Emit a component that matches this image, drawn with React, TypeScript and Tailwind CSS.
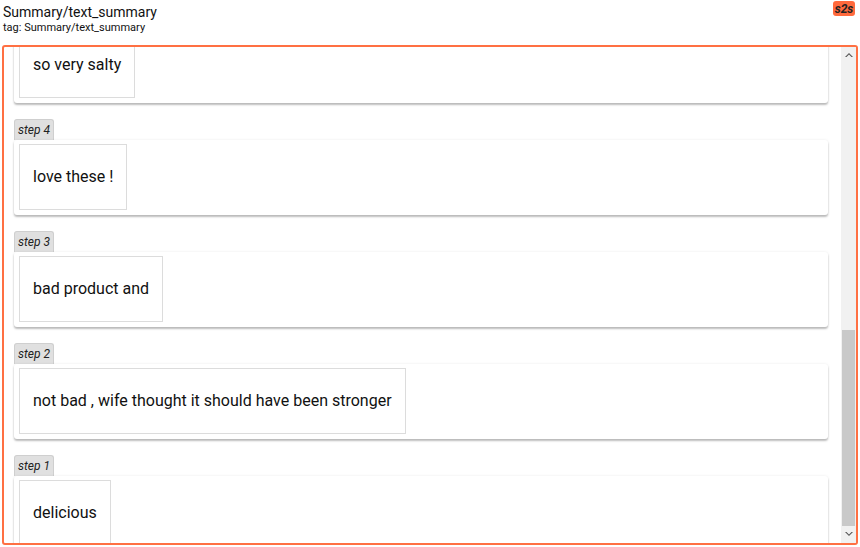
import React from "react";

const steps = [
  { label: "step 5", text: "so very salty" },
  { label: "step 4", text: "love these !" },
  { label: "step 3", text: "bad product and" },
  { label: "step 2", text: "not bad , wife thought it should have been stronger" },
  { label: "step 1", text: "delicious" },
];

function Step({ label, text }: { label: string; text: string }) {
  return (
    <div className="flex flex-col items-start">
      <div className="h-[21px] px-[3px] flex items-center bg-[#e0e0e0] border border-[#cfcfcf] border-b-0 rounded-t-[3px] text-[12px] italic text-[#222]">
        {label}
      </div>
      <div className="w-full h-[75px] bg-white rounded-[3px] shadow-[0_2px_2px_rgba(0,0,0,0.25),0_0_3px_rgba(0,0,0,0.08)] pt-[4px] pl-[5px]">
        <div className="inline-flex items-center h-[66px] px-[13px] border border-[#dcdcdc] text-[16px] text-[#111]">
          {text}
        </div>
      </div>
    </div>
  );
}

export default function App() {
  return (
    <div
      className="w-[860px] h-[547px] bg-white flex flex-col overflow-hidden"
      style={{ fontFamily: "Roboto, 'Liberation Sans', sans-serif" }}
    >
      <div className="flex justify-between items-start h-[45px] pl-[3px] pr-[5px]">
        <div className="flex flex-col pt-[3px]">
          <div className="text-[14px] leading-[18px] text-[#111]">Summary/text_summary</div>
          <div className="text-[11px] leading-[14px] text-[#111]">tag: Summary/text_summary</div>
        </div>
        <div className="mt-[1px] h-[15px] w-[22px] rounded-[3px] bg-[#ff6a3d] text-[12px] font-bold italic text-[#222] flex items-center justify-center leading-none">
          s2s
        </div>
      </div>
      <div className="mx-[2px] h-[500px] border-2 border-[#ff7043] rounded-[3px] flex overflow-hidden">
        <div className="flex-1 overflow-hidden pl-[10px] pr-[13px]">
          <div className="-mt-[40px] flex flex-col gap-[16px]">
            {steps.map((s) => (
              <Step key={s.label} label={s.label} text={s.text} />
            ))}
          </div>
        </div>
        <div className="w-[15px] bg-[#f1f1f1] flex flex-col">
          <div className="h-[15px] flex items-center justify-center">
            <svg width="8" height="5" viewBox="0 0 8 5">
              <path d="M0 5 L4 1 L8 5 L6.5 5 L4 2.6 L1.5 5 Z" fill="#555" />
            </svg>
          </div>
          <div className="flex-1 flex flex-col justify-end">
            <div className="h-[196px] mx-[1px] bg-[#c9c9c9]" />
          </div>
          <div className="h-[17px] flex items-center justify-center">
            <svg width="8" height="5" viewBox="0 0 8 5">
              <path d="M0 0 L4 4 L8 0 L6.5 0 L4 2.4 L1.5 0 Z" fill="#555" />
            </svg>
          </div>
        </div>
      </div>
    </div>
  );
}
